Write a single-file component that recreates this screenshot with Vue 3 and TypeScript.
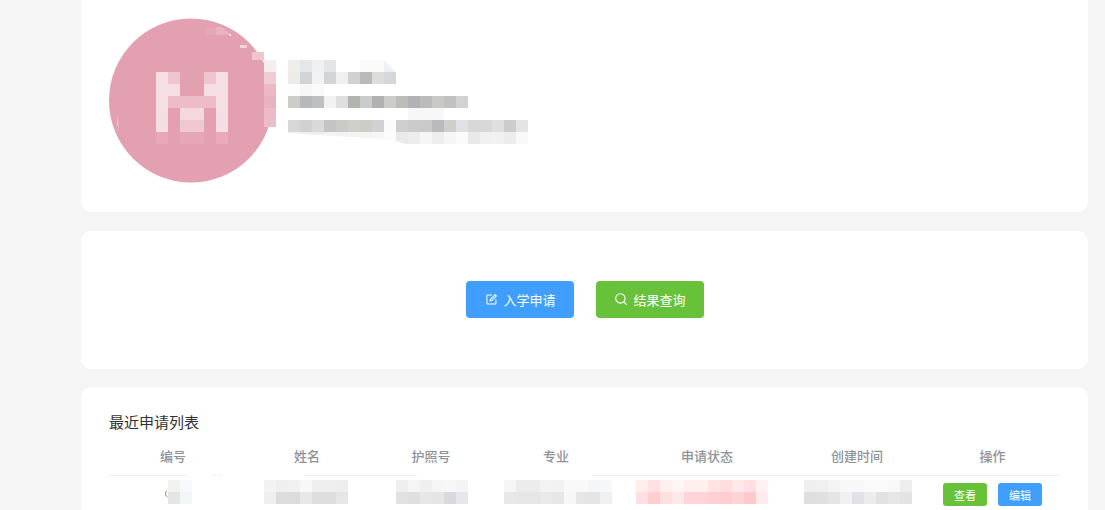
<script setup lang="ts">
interface MaskCell {
  offset: number;
  top: string[];
  bottom: string[];
}

const pink = '#e3a0b0'

// letter blocks of the blurred avatar, 12px each, starting at x=47 y=54 in the svg
const avatarBlocks: string[][] = [
  ['#f6dfe4', '#edc4cf', pink, pink, '#edc4cf', '#f6dfe4'],
  ['#f6dfe4', '#f6dfe4', pink, pink, '#f6dfe4', '#f6dfe4'],
  ['#f6dfe4', '#eebcc9', '#eebcc9', '#eebcc9', '#eebcc9', '#f6dfe4'],
  ['#f6dfe4', pink, '#f3d8de', '#f3d8de', pink, '#f6dfe4'],
  ['#f6dfe4', pink, '#f0c8d2', '#f0c8d2', pink, '#f6dfe4'],
  ['#e9a7b7', pink, '#e7a6b6', '#e7a6b6', pink, '#eba9b9']
]

const edgeBlocks = [
  { y: 42, h: 12, fill: '#f7edef' },
  { y: 54, h: 12, fill: '#efcdd5' },
  { y: 66, h: 12, fill: '#eab9c5' },
  { y: 78, h: 12, fill: '#e8b3c0' },
  { y: 90, h: 12, fill: '#ebbcc8' },
  { y: 102, h: 7, fill: '#ecbcc8' }
]

const profileRows: string[][] = [
  ['#efeeec', '#e4e6e8', '#eff0f1', '#e4e5e6', '#fff', '#fff', '#fbfbf9', '#fbfbf9', '#eef0f2'],
  ['#ecebe8', '#d2d5d8', '#f2f3f3', '#d3d6d6', '#f0f0f0', '#d0d1d0', '#bababa', '#dddddb', '#d4d8db'],
  ['#fdfdfd', '#f7f7f7', '#fafafa'],
  ['#cdccc8', '#b6b8ba', '#bbc0c0', '#f2f2f2', '#dfdfdf', '#b4b4af', '#c9cccd', '#b0b1b0', '#cdccc8', '#bcbcb8', '#b1b2b6', '#bbbbba', '#c9c9c6', '#c0c2c2', '#d2d3d1'],
  ['#fff', '#fff', '#fff', '#fff', '#fff', '#fff', '#fff', '#fff', '#fff', '#fff', '#f7f7f7', '#f7f7f7', '#f7f7f7'],
  ['#d8d7d5', '#cfd1d3', '#d9d9d9', '#c3c4c4', '#cbcac6', '#cfcfcc', '#cdcdc6', '#cfd1d2', '#fbfbfb', '#cecfd0', '#cbcbcb', '#cbc9c9', '#b8babd', '#cfceca', '#dfe1e4', '#d9d8d6', '#d9d8d7', '#dfdfdf', '#cdccca', '#e3e4e6'],
  ['#f0f1f1', '#eeeeee', '#eeeeee', '#f3f3f3', '#f2f2f2', '#f3f3f3', '#f4f4f4', '#f6f6f6', '#fcfcfc', '#e9e9e9', '#ededed', '#f6f6f6', '#eeeeee', '#f6f6f6', '#fbfbfb', '#e9e9e9', '#f0f0f0', '#f1f1f1', '#ececec', '#f9f9f9']
]

const columns = ['编号', '姓名', '护照号', '专业', '申请状态', '创建时间', '操作']

// white smears over the header rule, x relative to the table
const ruleGaps = [
  { left: 78, width: 25 },
  { left: 113, width: 82 },
  { left: 308, width: 175 }
]

const rowCells: MaskCell[] = [
  {
    offset: 59,
    top: ['#f2f2f0', '#f7f9fb'],
    bottom: ['#e5e6e3', '#f3f6f8']
  },
  {
    offset: 72,
    top: ['#f2f2f2', '#efefef', '#f0f1f0', '#f7f9f8', '#efefef', '#efefef', '#eeeeee'],
    bottom: ['#efefef', '#dcdcdc', '#dcdcdc', '#e8e8e8', '#dedede', '#dedede', '#e6e6e6']
  },
  {
    offset: 48,
    top: ['#efefef', '#f5f5f5', '#efefef', '#f5f5f5', '#f7f7f7', '#f4f4f4'],
    bottom: ['#e2e2e2', '#dfdfe0', '#e7e7e7', '#e5e5e5', '#d8d9dc', '#e6e6e8']
  },
  {
    offset: 36,
    top: ['#f6f6f6', '#ececec', '#ececec', '#f3f3f1', '#f1f2f1', '#f9f9f9', '#f9f9f9', '#f6f6f6', '#f6f7f9'],
    bottom: ['#e8e8e8', '#e5e6e5', '#e5e6e5', '#eaeaea', '#e6e7e6', '#f7f7f7', '#e6e6e6', '#e5e5e5', '#eff0f2']
  },
  {
    offset: 24,
    top: ['#ffeeee', '#ffe1e4', '#fff0ef', '#fff5f4', '#ffefef', '#ffefef', '#ffe4e6', '#ffdde0', '#ffe9ea', '#ffdfe2', '#fff1f2'],
    bottom: ['#ffe0e2', '#ffcfcf', '#ffe0e1', '#ffe8e8', '#ffd5da', '#ffd3d9', '#ffd0d3', '#ffcdcf', '#ffd4d6', '#ffc9cc', '#ffebed']
  },
  {
    offset: 36,
    top: ['#efefef', '#f0f0f0', '#f4f4f4', '#f8f8f8', '#f8f8f8', '#fafafa', '#fafafa', '#f9f9f9', '#eeeeee'],
    bottom: ['#dedfe0', '#e0e0e0', '#e5e5e5', '#f1f1f1', '#e0e2e5', '#ececec', '#e0e2e4', '#e6e6e6', '#e3e3e3']
  }
]
</script>

<template>
  <div class="page">
    <section class="card profile">
      <svg class="avatar" width="167" height="165" viewBox="0 0 167 165">
        <circle cx="82" cy="82.5" r="82" :fill="pink" />
        <rect x="96" y="10" width="11" height="7" fill="#e5a6b5" />
        <path d="M107 9h6l6 6v2h-12z" fill="#e9b3c0" />
        <path d="M119 15l3 1.5v1.5h-1z" fill="#fbeef1" />
        <path d="M8.5 97l1 13-1.5-3z" fill="#f3d6dd" />
        <rect x="131" y="27" width="7" height="3" fill="#f3d3db" />
        <template v-for="(row, r) in avatarBlocks" :key="r">
          <rect
            v-for="(fill, c) in row"
            :key="c"
            :x="47 + c * 12"
            :y="54 + r * 12"
            width="12"
            height="12"
            :fill="fill"
          />
        </template>
        <rect x="143" y="34" width="12" height="8" fill="#efc6cf" />
        <rect
          v-for="block in edgeBlocks"
          :key="block.y"
          x="155"
          :y="block.y"
          width="12"
          :height="block.h"
          :fill="block.fill"
        />
      </svg>
      <div class="profile-text">
        <div v-for="(row, r) in profileRows" :key="r" class="mask-row" :class="{ smudge: r === 6 }">
          <i
            v-for="(color, c) in row"
            :key="c"
            class="block"
            :class="{ corner: r === 0 && c === 8 }"
            :style="{ background: color }"
          ></i>
        </div>
      </div>
    </section>

    <section class="card actions">
      <button class="btn primary" type="button">
        <svg width="11" height="11" viewBox="0 0 12 12" fill="none" stroke="currentColor" stroke-width="1.1">
          <path d="M6.5 1.2H1.6a.6.6 0 0 0-.6.6v8.6c0 .3.3.6.6.6h8.6c.3 0 .6-.3.6-.6V5.6" />
          <path d="M4.6 7.4l.3-1.7L10 .7l1.3 1.3-5 5.1z" />
        </svg>
        <span>入学申请</span>
      </button>
      <button class="btn success" type="button">
        <svg class="search" width="12" height="12" viewBox="0 0 12 12" fill="none" stroke="currentColor" stroke-width="1.1">
          <circle cx="5.4" cy="5.4" r="4.7" />
          <path d="M8.8 8.8l2.6 2.6" stroke-linecap="round" />
        </svg>
        <span>结果查询</span>
      </button>
    </section>

    <section class="card recent">
      <h3 class="title">最近申请列表</h3>
      <div class="table">
        <div class="thead">
          <div v-for="name in columns" :key="name" class="th">{{ name }}</div>
        </div>
        <div class="rule">
          <i
            v-for="gap in ruleGaps"
            :key="gap.left"
            class="rule-gap"
            :style="{ left: gap.left + 'px', width: gap.width + 'px' }"
          ></i>
        </div>
        <div class="tbody-row">
          <div
            v-for="(cell, i) in rowCells"
            :key="i"
            class="cell"
            :style="{ marginLeft: cell.offset + 'px' }"
          >
            <svg v-if="i === 0" class="stray" width="4" height="8" viewBox="0 0 4 8" fill="none" stroke="#7d7468">
              <path d="M3 .8C1.2 1.4.8 5.6 3.4 7" />
            </svg>
            <div class="mask-row">
              <i v-for="(color, c) in cell.top" :key="c" class="block" :style="{ background: color }"></i>
            </div>
            <div class="mask-row">
              <i v-for="(color, c) in cell.bottom" :key="c" class="block" :style="{ background: color }"></i>
            </div>
          </div>
          <div class="ops">
            <button class="mini success" type="button">查看</button>
            <button class="mini primary" type="button">编辑</button>
          </div>
        </div>
      </div>
    </section>
  </div>
</template>

<style>
html,
body {
  margin: 0;
  height: 100%;
  overflow: hidden;
  background: #f5f5f5;
}
</style>

<style scoped>
.page {
  height: 550px;
  margin-top: -40px;
  padding-left: 81px;
  overflow: hidden;
  box-sizing: border-box;
  font-family: "Noto Sans CJK SC", "Noto Sans", sans-serif;
}
.card {
  width: 1007px;
  background: #fff;
  border-radius: 10px;
  box-sizing: border-box;
}
.profile {
  display: flex;
  height: 252px;
  padding: 58px 0 0 28px;
}
.avatar {
  flex: none;
}
.profile-text {
  margin: 42px 0 0 12px;
}
.mask-row {
  display: flex;
  height: 12px;
}
.block {
  display: block;
  flex: none;
  width: 12px;
  height: 12px;
}
.corner {
  clip-path: polygon(0 0, 100% 100%, 0 100%);
}
.smudge {
  clip-path: polygon(0 0, 100% 0, 100% 100%, 118px 100%, 108px 9px, 96px 8px, 96px 7px, 0 1px);
}
.actions {
  display: flex;
  align-items: center;
  justify-content: center;
  gap: 22px;
  height: 138px;
  margin-top: 19px;
  padding-bottom: 2px;
}
.btn {
  display: flex;
  align-items: center;
  gap: 7px;
  width: 108px;
  height: 37px;
  padding: 0 0 0 20px;
  border: 0;
  border-radius: 4px;
  color: #fff;
  font: inherit;
  font-size: 13px;
}
.search {
  margin-left: -1px;
}
.primary {
  background: #409eff;
}
.success {
  background: #67c23a;
}
.recent {
  height: 160px;
  margin-top: 18px;
  padding: 24px 27px 0 28px;
}
.title {
  margin: 0;
  height: 22px;
  color: #303133;
  font-size: 15px;
  font-weight: 400;
  line-height: 22px;
}
.table {
  margin-top: 12px;
}
.thead {
  display: grid;
  grid-template-columns: 128px 140px 108px 142px 160px 140px 131px;
  height: 21px;
}
.th {
  color: #909399;
  font-size: 13px;
  font-weight: 500;
  line-height: 21px;
  text-align: center;
}
.rule {
  position: relative;
  height: 1px;
  margin-top: 9px;
  background: #f0f1f5;
}
.rule-gap {
  position: absolute;
  top: 0;
  height: 1px;
  background: #fff;
}
.tbody-row {
  display: flex;
  align-items: flex-start;
  padding-top: 4px;
}
.cell {
  position: relative;
  flex: none;
}
.stray {
  position: absolute;
  top: 10px;
  left: -4px;
}
.ops {
  display: flex;
  gap: 11px;
  margin: 3px 0 0 31px;
}
.mini {
  width: 44px;
  height: 23px;
  padding: 0;
  border: 0;
  border-radius: 3px;
  color: #fff;
  font: inherit;
  font-size: 11px;
}
</style>
